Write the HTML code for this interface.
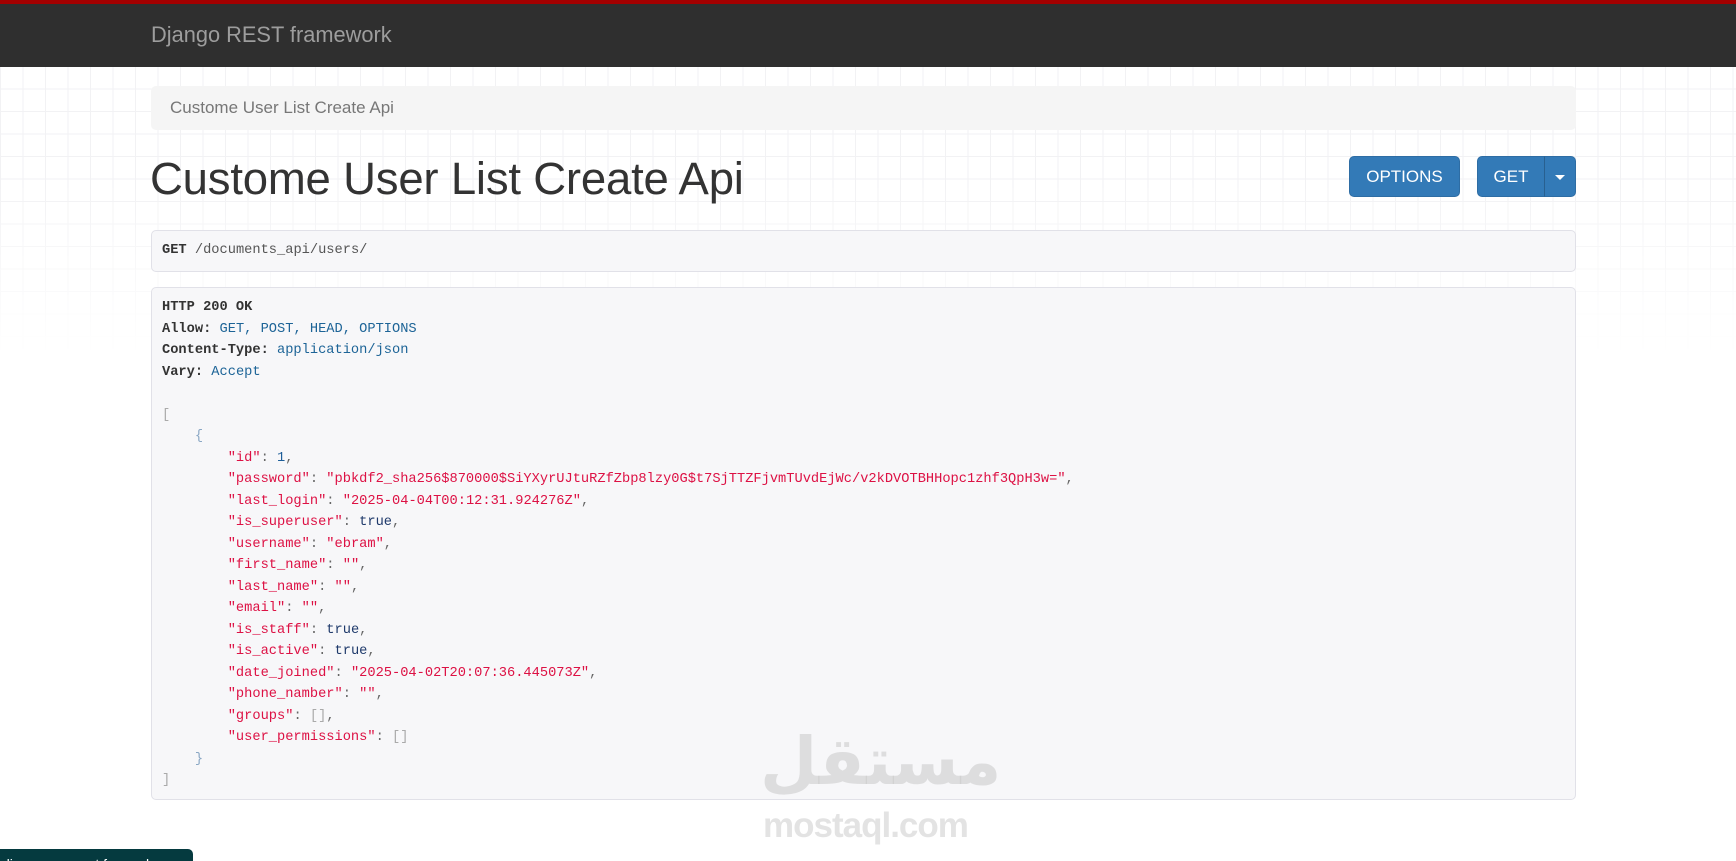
<!DOCTYPE html>
<html><head><meta charset="utf-8"><style>
*{box-sizing:border-box;margin:0;padding:0}
html,body{width:1736px;height:861px;overflow:hidden;background:#fff;font-family:"Liberation Sans",Arial,sans-serif;position:relative}
.grid{position:absolute;left:0;top:66px;width:1736px;height:290px;
background-image:linear-gradient(#f2f2f4 1px,transparent 1px),linear-gradient(90deg,#f2f2f4 1px,transparent 1px);
background-size:22.5px 22.5px;
-webkit-mask-image:linear-gradient(#000 40%,transparent);mask-image:linear-gradient(#000 40%,transparent)}
.nav{position:absolute;left:0;top:0;width:1736px;height:67px;background:#2f2f2f;border-top:4px solid #a30000}
.brand{position:absolute;left:151px;top:18px;font-size:21.8px;color:#9d9d9d}
.bc{position:absolute;left:151px;top:86px;width:1425px;height:44px;background:#f5f5f5;border-radius:5px;font-size:17px;color:#777;padding:12px 19px}
h1{position:absolute;left:150px;top:153px;font-size:45.5px;font-weight:normal;color:#333;letter-spacing:-0.2px}
.btn{position:absolute;top:156px;height:41px;background:#337ab7;border:1px solid #2e6da4;color:#fff;font-size:17px;text-align:center;line-height:39px;border-radius:5px}
.box{position:absolute;left:151px;width:1425px;background:#f7f7f9;border:1px solid #e1e1e8;border-radius:5px;font-family:"Liberation Mono",monospace;font-size:13.7px;color:#333}
pre{font-family:"Liberation Mono",monospace;font-size:13.7px;line-height:21.5px;white-space:pre}
b{font-weight:bold}
.v{color:#1d6497}.s{color:#dd1144}.p{color:#666}.l{color:#1f3a6b}.n{color:#1d5e99}.br{color:#aaa}.cb{color:#8aa7c4}
.wm{position:absolute;left:763px;top:806px;font-size:35px;font-weight:bold;color:#e3e3e3;letter-spacing:-1px}
.wa{position:absolute;left:760px;top:722px;font-size:66px;font-weight:bold;color:rgba(200,200,200,.55);font-family:"DejaVu Sans",sans-serif;line-height:80px}
.tip{position:absolute;left:0;top:849px;width:193px;height:20px;background:#053a3f;border-radius:0 5px 0 0;color:#fff;font-size:14px;padding:7px 0 0 2px;overflow:hidden;white-space:nowrap}
</style></head><body>
<div class="grid"></div>
<div class="nav"><div class="brand">Django REST framework</div></div>
<div class="bc">Custome User List Create Api</div>
<h1>Custome User List Create Api</h1>
<div class="btn" style="left:1349px;width:111px">OPTIONS</div>
<div class="btn" style="left:1477px;width:68px;border-radius:5px 0 0 5px">GET</div>
<div class="btn" style="left:1544px;width:32px;border-radius:0 5px 5px 0;border-left:1px solid #286090"><svg width="10" height="6" style="vertical-align:middle"><path d="M0 0H10L5 5Z" fill="#fff"/></svg></div>
<div class="box" style="top:230px;height:42px;padding:0 10px"><pre style="line-height:40px"><b>GET</b> <span style="color:#555">/documents_api/users/</span></pre></div>
<div class="box" style="top:287px;height:513px;padding:9px 10px"><pre><b>HTTP 200 OK</b>
<b>Allow:</b> <span class="v">GET, POST, HEAD, OPTIONS</span>
<b>Content-Type:</b> <span class="v">application/json</span>
<b>Vary:</b> <span class="v">Accept</span>

<span class="br">[</span>
    <span class="cb">{</span>
        <span class="s">"id"</span><span class="p">: </span><span class="n">1</span><span class="p">,</span>
        <span class="s">"password"</span><span class="p">: </span><span class="s">"pbkdf2_sha256$870000$SiYXyrUJtuRZfZbp8lzy0G$t7SjTTZFjvmTUvdEjWc/v2kDVOTBHHopc1zhf3QpH3w="</span><span class="p">,</span>
        <span class="s">"last_login"</span><span class="p">: </span><span class="s">"2025-04-04T00:12:31.924276Z"</span><span class="p">,</span>
        <span class="s">"is_superuser"</span><span class="p">: </span><span class="l">true</span><span class="p">,</span>
        <span class="s">"username"</span><span class="p">: </span><span class="s">"ebram"</span><span class="p">,</span>
        <span class="s">"first_name"</span><span class="p">: </span><span class="s">""</span><span class="p">,</span>
        <span class="s">"last_name"</span><span class="p">: </span><span class="s">""</span><span class="p">,</span>
        <span class="s">"email"</span><span class="p">: </span><span class="s">""</span><span class="p">,</span>
        <span class="s">"is_staff"</span><span class="p">: </span><span class="l">true</span><span class="p">,</span>
        <span class="s">"is_active"</span><span class="p">: </span><span class="l">true</span><span class="p">,</span>
        <span class="s">"date_joined"</span><span class="p">: </span><span class="s">"2025-04-02T20:07:36.445073Z"</span><span class="p">,</span>
        <span class="s">"phone_namber"</span><span class="p">: </span><span class="s">""</span><span class="p">,</span>
        <span class="s">"groups"</span><span class="p">: </span><span class="br">[]</span><span class="p">,</span>
        <span class="s">"user_permissions"</span><span class="p">: </span><span class="br">[]</span>
    <span class="cb">}</span>
<span class="br">]</span></pre></div>
<div class="wa" dir="rtl">مستقل</div>
<div class="wm">mostaql.com</div>
<div class="tip">  disarrangement for work</div>
</body></html>
